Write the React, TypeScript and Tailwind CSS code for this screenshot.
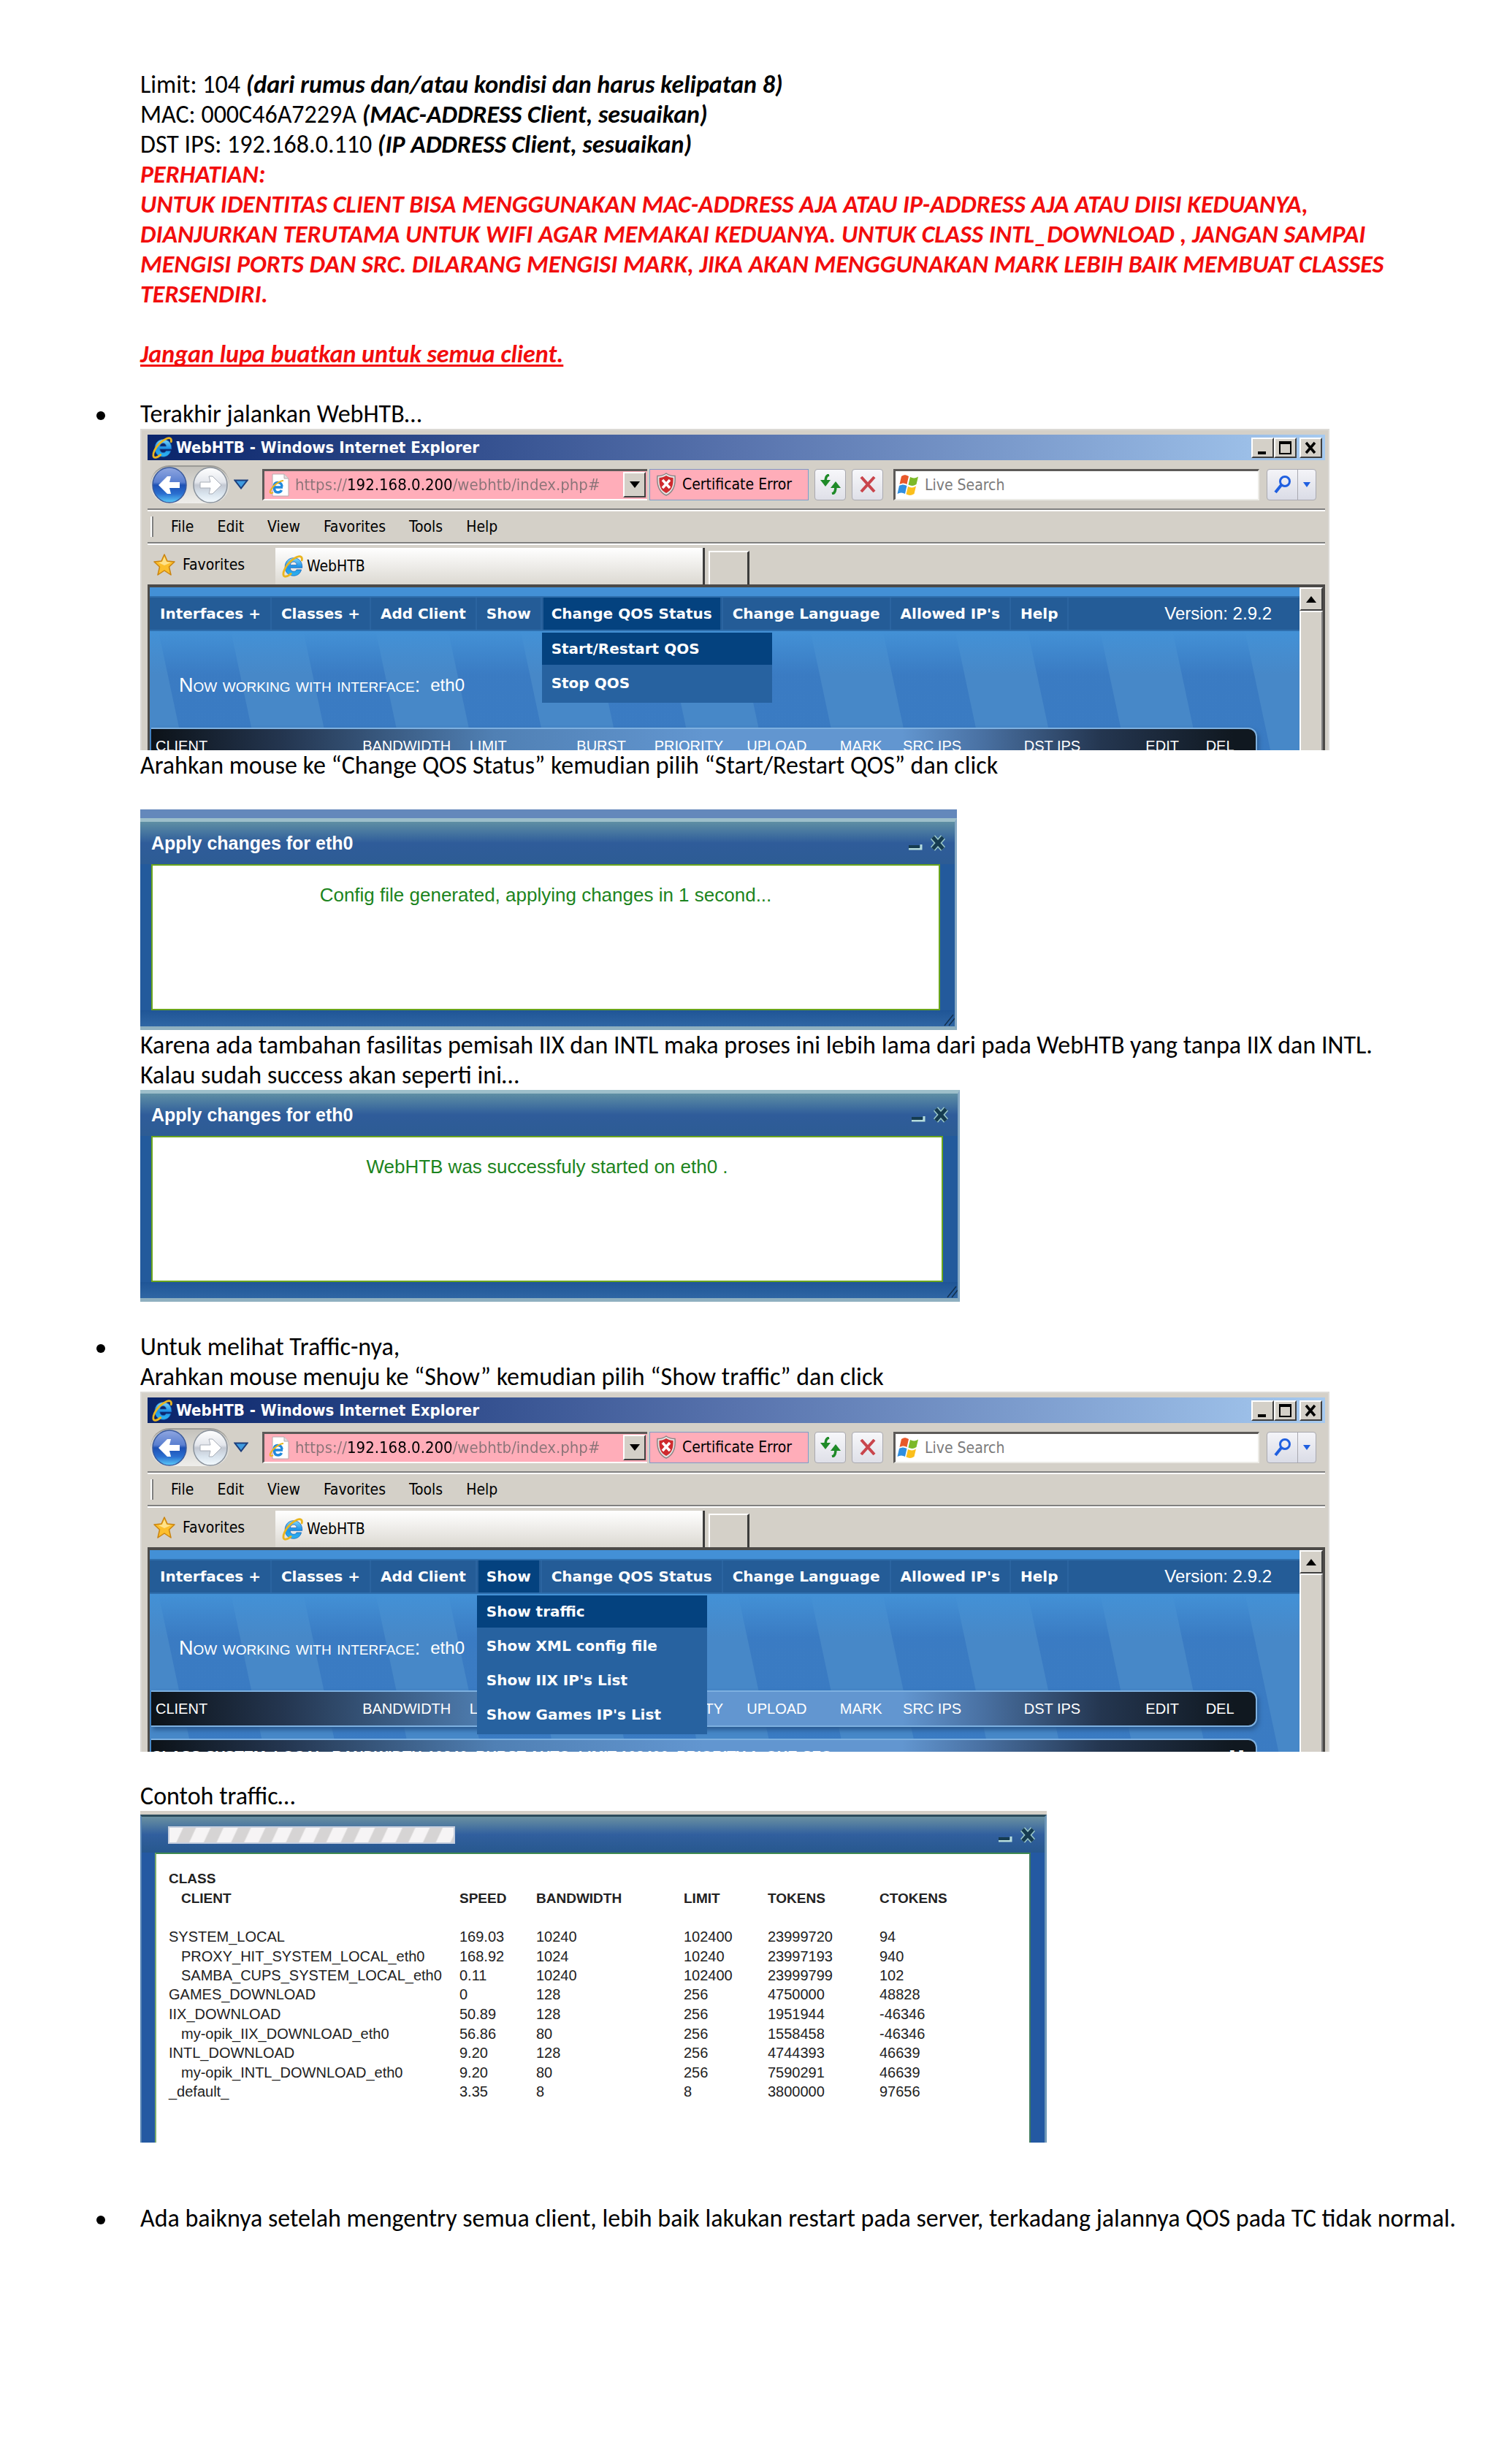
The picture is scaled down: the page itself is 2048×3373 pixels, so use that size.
import { useId, type ReactNode } from 'react';

type MenuItem = {
  label: string;
  children?: string[];
};

type Column = {
  label: string;
  width: string;
};

type TrafficRow = {
  name: string;
  nested?: boolean;
  values: string[];
};

const IE_MENU = ['File', 'Edit', 'View', 'Favorites', 'Tools', 'Help'];

const NAV_ITEMS: MenuItem[] = [
  { label: 'Interfaces +' },
  { label: 'Classes +' },
  { label: 'Add Client' },
  { label: 'Show', children: ['Show traffic', 'Show XML config file', "Show IIX IP's List", "Show Games IP's List"] },
  { label: 'Change QOS Status', children: ['Start/Restart QOS', 'Stop QOS'] },
  { label: 'Change Language' },
  { label: "Allowed IP's" },
  { label: 'Help' },
];

const CLIENT_COLUMNS: Column[] = [
  { label: 'CLIENT', width: 'w-[288px]' },
  { label: 'BANDWIDTH', width: 'w-[146px]' },
  { label: 'LIMIT', width: 'w-[146px]' },
  { label: 'BURST', width: 'w-[106px]' },
  { label: 'PRIORITY', width: 'w-[126px]' },
  { label: 'UPLOAD', width: 'w-[127px]' },
  { label: 'MARK', width: 'w-[86px]' },
  { label: 'SRC IPS', width: 'w-[165px]' },
  { label: 'DST IPS', width: 'w-[166px]' },
  { label: 'EDIT', width: 'w-[82px]' },
  { label: 'DEL', width: 'w-[68px]' },
];

const TRAFFIC_ROWS: TrafficRow[] = [
  { name: 'SYSTEM_LOCAL', values: ['169.03', '10240', '102400', '23999720', '94'] },
  { name: 'PROXY_HIT_SYSTEM_LOCAL_eth0', nested: true, values: ['168.92', '1024', '10240', '23997193', '940'] },
  { name: 'SAMBA_CUPS_SYSTEM_LOCAL_eth0', nested: true, values: ['0.11', '10240', '102400', '23999799', '102'] },
  { name: 'GAMES_DOWNLOAD', values: ['0', '128', '256', '4750000', '48828'] },
  { name: 'IIX_DOWNLOAD', values: ['50.89', '128', '256', '1951944', '-46346'] },
  { name: 'my-opik_IIX_DOWNLOAD_eth0', nested: true, values: ['56.86', '80', '256', '1558458', '-46346'] },
  { name: 'INTL_DOWNLOAD', values: ['9.20', '128', '256', '4744393', '46639'] },
  { name: 'my-opik_INTL_DOWNLOAD_eth0', nested: true, values: ['9.20', '80', '256', '7590291', '46639'] },
  { name: '_default_', values: ['3.35', '8', '8', '3800000', '97656'] },
];

function ExplorerLogo({ className }: { className: string }) {
  const id = useId();
  return (
    <svg viewBox="0 0 32 34" className={className} aria-hidden="true">
      <defs>
        <linearGradient id={id} x1="0" y1="0" x2="0" y2="1">
          <stop offset="0" stopColor="#7fd6fb" />
          <stop offset="0.5" stopColor="#1f93e6" />
          <stop offset="1" stopColor="#2fb4f0" />
        </linearGradient>
      </defs>
      <path
        d="M30 19.5H12.5c.2 3.4 2.2 5.3 5 5.3 2.2 0 3.6-.9 4.3-2.6h7c-1.3 5.4-5.7 8.8-11.4 8.8C10.1 31 5 26 5 18.3 5 10.5 10.2 5 17.4 5 25.3 5 30.5 10.5 30 19.5zM12.6 15.4h9.5c-.3-3-1.9-4.7-4.6-4.7s-4.5 1.7-4.9 4.7z"
        fill={`url(#${id})`}
        stroke="#1560b8"
        strokeWidth="0.8"
      />
      <path
        d="M29.5 8.5C30.5 4 28 1.5 23 3.5 16 6.3 8 14 4.5 21.5c-2.8 6-2.6 10.8 1.3 10.6 2.2-.1 5-1.6 7.7-4"
        fill="none"
        stroke="#e9b520"
        strokeWidth="3"
        strokeLinecap="round"
      />
    </svg>
  );
}

function NavArrow({ direction }: { direction: 'back' | 'forward' }) {
  const id = useId();
  const back = direction === 'back';
  return (
    <svg viewBox="0 0 48 50" className="block h-[50px] w-12" aria-hidden="true">
      <defs>
        <linearGradient id={id} x1="0" y1="0" x2="0" y2="1">
          <stop offset="0" stopColor={back ? '#8fa6e0' : '#ffffff'} />
          <stop offset="0.42" stopColor={back ? '#5a7fd0' : '#e3e6ec'} />
          <stop offset="0.5" stopColor={back ? '#1d50b4' : '#c3c8d2'} />
          <stop offset="0.75" stopColor={back ? '#2a6fd0' : '#d9e4ee'} />
          <stop offset="1" stopColor={back ? '#5ccbfa' : '#f4fbff'} />
        </linearGradient>
      </defs>
      <ellipse cx="24" cy="25" rx="23" ry="24" fill={`url(#${id})`} stroke={back ? '#3a5a9c' : '#8a929c'} strokeWidth="1.5" />
      <path
        d={back ? 'M9 25 21 13h5l-2 8h14v8H24l2 8h-5z' : 'M39 25 27 13h-5l2 8H10v8h14l-2 8h5z'}
        fill="#fff"
        stroke={back ? 'none' : '#a8aeb8'}
        strokeWidth="1"
        strokeLinejoin="round"
      />
    </svg>
  );
}

function CaptionButton({ label, children }: { label: string; children: ReactNode }) {
  return (
    <button
      type="button"
      aria-label={label}
      className="h-7 w-[31px] border-2 border-t-white border-l-white border-r-[#404040] border-b-[#404040] bg-[#d4d0c8]"
    >
      <svg viewBox="0 0 27 24" className="h-6 w-[27px]" fill="none" stroke="#000" aria-hidden="true">
        {children}
      </svg>
    </button>
  );
}

function TitleBar() {
  return (
    <div className="flex h-[35px] items-center bg-linear-to-r from-[#0a246a] via-[#5873ad] to-[#a6caf0] pr-1 pl-[5px]">
      <ExplorerLogo className="h-[31px] w-[30px]" />
      <h2 className="ml-1 flex-1 font-[DejaVu_Sans_Condensed,DejaVu_Sans,sans-serif] text-[22px] leading-7 font-bold text-white">
        WebHTB - Windows Internet Explorer
      </h2>
      <CaptionButton label="Minimize">
        <path d="M7 19h11" strokeWidth="4" />
      </CaptionButton>
      <CaptionButton label="Maximize">
        <path d="M5 5h17" strokeWidth="4" />
        <path d="M6 4v16h15V4" strokeWidth="2" />
      </CaptionButton>
      <div className="w-1" />
      <CaptionButton label="Close">
        <path d="m7 5 12 14M19 5 7 19" strokeWidth="3.5" />
      </CaptionButton>
    </div>
  );
}

function AddressBar() {
  const addressId = useId();
  const searchId = useId();
  return (
    <div className="flex h-[68px] items-center border-b-2 border-[#808080] pl-1">
      <div className="flex gap-2 rounded-full border-t-2 border-[#9b9a96] bg-linear-to-b from-[#c4c2bc] to-[#efeeeb] px-0.5">
        <button type="button" aria-label="Back">
          <NavArrow direction="back" />
        </button>
        <button type="button" aria-label="Forward">
          <NavArrow direction="forward" />
        </button>
      </div>
      <button type="button" aria-label="Recent pages" className="ml-1.5">
        <svg viewBox="0 0 20 14" className="h-3.5 w-5" aria-hidden="true">
          <path d="M1.5 1.5h17L10 12.5z" fill="#3f9be0" stroke="#1c3f7c" strokeWidth="2" />
        </svg>
      </button>

      <div className="ml-[19px] flex h-[43px] w-[527px] items-center border-t-3 border-l-3 border-b-2 border-t-[#5c5a58] border-l-[#5c5a58] border-b-white bg-[#ffadb9] pl-1.5">
        <svg viewBox="0 0 28 32" className="h-8 w-7 shrink-0" aria-hidden="true">
          <path d="M5 1h16l6 6v24H5z" fill="#fff" stroke="#b9a9ad" />
          <path d="M21 1v6h6" fill="#dedede" stroke="#b9a9ad" />
          <path d="M19 19H7c0-4 2-6.5 5.5-6.5S18 15 18 18M7.5 20c0 4 2 6 5 6 2.500 0 4-1 5-3" fill="none" stroke="#2088dc" strokeWidth="3.5" />
          <path d="M20 10c-5 0-15 7-18 14-1 3 1 4 4 2" fill="none" stroke="#e9b520" strokeWidth="2" />
        </svg>
        <label htmlFor={addressId} className="sr-only">
          Address
        </label>
        <input
          id={addressId}
          type="text"
          defaultValue="https://192.168.0.200/webhtb/index.php#"
          className="ml-2 min-w-0 flex-1 bg-linear-[90deg,#8a7478_71px,#000_71px,#000_216px,#8a7478_216px] bg-clip-text font-[DejaVu_Sans_Condensed,DejaVu_Sans,sans-serif] text-[22px] leading-8 text-transparent outline-none"
        />
        <button
          type="button"
          aria-label="Show address list"
          className="mr-0.5 flex h-[35px] w-[31px] items-center justify-center border-2 border-t-white border-l-white border-r-[#404040] border-b-[#404040] bg-[#d4d0c8]"
        >
          <svg viewBox="0 0 14 9" className="h-[9px] w-3.5" aria-hidden="true">
            <path d="M0 0h14L7 9z" />
          </svg>
        </button>
      </div>

      <button
        type="button"
        className="ml-[3px] flex h-[43px] w-[218px] items-center gap-2 border border-[#7b9cc8] bg-[#ffadb9] pl-2 font-[DejaVu_Sans_Condensed,DejaVu_Sans,sans-serif] text-[21px] whitespace-nowrap text-black"
      >
        <svg viewBox="0 0 28 32" className="h-8 w-7 shrink-0" aria-hidden="true">
          <path d="M14 1c4 3 8 3.500 12 3.500C27 16 25 26 14 31 3 26 1 16 2 4.500 6 4.500 10 4 14 1z" fill="#e8e4e4" stroke="#8b8585" strokeWidth="1.5" />
          <path d="M14 4c3 2 6.500 3 9.500 3C24 17 22 24 14 28 6 24 4 17 4.500 7 7.500 7 11 6 14 4z" fill="#cf2a2e" />
          <path d="m9 10 10 11M19 10 9 21" stroke="#fff" strokeWidth="3.5" />
        </svg>
        Certificate Error
      </button>

      <button type="button" aria-label="Refresh" className="ml-2 flex h-[43px] w-[43px] items-center justify-center rounded-[4px] border border-[#a9a9b0] bg-linear-to-b from-[#f7f7fa] to-[#dfe0e8]">
        <svg viewBox="0 0 30 28" className="h-7 w-[30px]" fill="none" stroke="#1f8a28" strokeWidth="3.5" aria-hidden="true">
          <path d="M13 1c-4 1-5 4-5 11" />
          <path d="M1 8h14l-7 9z" fill="#1f8a28" stroke="none" />
          <path d="M17 27c4-1 5-4 5-11" />
          <path d="M15 19h14l-7-9z" fill="#1f8a28" stroke="none" />
        </svg>
      </button>
      <button type="button" aria-label="Stop" className="ml-2 flex h-[43px] w-[43px] items-center justify-center rounded-[4px] border border-[#a9a9b0] bg-linear-to-b from-[#f7f7fa] to-[#dfe0e8]">
        <svg viewBox="0 0 22 22" className="h-[22px] w-[22px]" fill="none" stroke="#c9454c" strokeWidth="4" aria-hidden="true">
          <path d="m2 1 18 20M20 1 2 21" />
        </svg>
      </button>

      <div className="ml-[14px] flex h-[43px] flex-1 items-center border-t-3 border-l-3 border-r-2 border-b-2 border-t-[#5c5a58] border-l-[#5c5a58] border-r-[#ecebe6] border-b-[#ecebe6] bg-white pl-0.5">
        <svg viewBox="0 0 32 30" className="h-[30px] w-8 shrink-0" aria-hidden="true">
          <path d="M6 3c4-2.500 6-2 10 0l-2.500 11c-3-2-6-2-10 0z" fill="#e8582a" />
          <path d="M18 4c4 2 7 2 11-.5L26.500 14c-4 2.500-7 2.500-11 .5z" fill="#7cb928" />
          <path d="M3 16c4-2 7-2 10.500 0L11 27c-3.500-2-7-2-10.500 0z" fill="#2f8ee0" />
          <path d="M15 17c4 2 7 2 11-.5L23.500 27c-4 2.500-7 2.500-11 .5z" fill="#fbbf1c" />
        </svg>
        <label htmlFor={searchId} className="sr-only">
          Search
        </label>
        <input
          id={searchId}
          type="search"
          placeholder="Live Search"
          className="ml-1.5 min-w-0 flex-1 bg-transparent font-[DejaVu_Sans_Condensed,DejaVu_Sans,sans-serif] text-[21px] leading-8 outline-none placeholder:text-[#7a7a7a] placeholder:opacity-100"
        />
      </div>

      <div className="mr-3 ml-2.5 flex h-[43px] rounded-[4px] border border-[#a9a9b0] bg-linear-to-b from-[#f4f4f8] to-[#dadce6]">
        <button type="button" aria-label="Search" className="flex w-[42px] items-center justify-center border-r border-[#a9a9b0]">
          <svg viewBox="0 0 26 26" className="h-[26px] w-[26px]" fill="none" stroke="#1f5fe0" aria-hidden="true">
            <circle cx="16" cy="9" r="6.5" strokeWidth="3" />
            <path d="M11 14 3 24" strokeWidth="4" />
          </svg>
        </button>
        <button type="button" aria-label="Search options" className="flex w-6 items-center justify-center">
          <svg viewBox="0 0 10 7" className="h-[7px] w-2.5" aria-hidden="true">
            <path d="M0 0h10L5 7z" fill="#1f5fe0" />
          </svg>
        </button>
      </div>
    </div>
  );
}

function MenuRow() {
  return (
    <div className="flex h-[46px] items-center border-t-2 border-b-2 border-t-white border-b-[#808080] pl-1">
      <div className="h-7 w-1 border-r-2 border-l-2 border-r-[#808080] border-l-white" />
      <div className="ml-6 flex gap-8 font-[DejaVu_Sans_Condensed,DejaVu_Sans,sans-serif] text-[21px] leading-8 text-black">
        {IE_MENU.map((item) => (
          <button key={item} type="button">
            {item}
          </button>
        ))}
      </div>
    </div>
  );
}

function TabRow() {
  return (
    <div className="flex h-14 items-end border-t-2 border-white font-[DejaVu_Sans_Condensed,DejaVu_Sans,sans-serif] text-[21px] leading-8 text-black">
      <button type="button" className="flex h-[54px] w-[175px] items-center gap-2.5 pl-2">
        <svg viewBox="0 0 30 30" className="h-[30px] w-[30px]" aria-hidden="true">
          <path
            d="m15 1 4 9 10 1-7.500 7 2.500 11-9-6-9 6 2.500-11L1 11l10-1z"
            fill="#fcbf2c"
            stroke="#c98412"
            strokeWidth="1.5"
            strokeLinejoin="round"
          />
          <path d="m15 4 3 7 6 1-9 4-8-4 5-1z" fill="#ffe28a" />
        </svg>
        Favorites
      </button>
      <button
        type="button"
        className="flex h-[50px] w-[588px] items-center gap-1 border-r-3 border-[#3c3c3c] bg-linear-to-b from-white to-[#dcd9d2] pl-2"
      >
        <ExplorerLogo className="h-8 w-[31px]" />
        WebHTB
      </button>
      <button
        type="button"
        aria-label="New tab"
        className="ml-[5px] h-[46px] w-14 border-t-2 border-r-3 border-l-2 border-t-white border-r-[#3c3c3c] border-l-white"
      />
    </div>
  );
}

function MainNav({ openMenu }: { openMenu: string }) {
  return (
    <nav className="flex h-12 items-center border-y-2 border-[#2f6fae] bg-[#245c97] pl-px font-[Verdana,DejaVu_Sans,sans-serif] text-[20px] leading-[44px] font-bold text-white">
      <ul className="flex">
        {NAV_ITEMS.map((item) => {
          const open = item.label === openMenu;
          return (
            <li key={item.label} className="relative border-r-2 border-[#2b64a0] px-0.5">
              <button type="button" className={`block px-[11px] whitespace-nowrap ${open ? 'bg-[#04427f]' : ''}`} aria-expanded={open}>
                {item.label}
              </button>
              {open && (
                <ul className="absolute top-full left-0 z-10 mt-1 w-[315px] bg-[#2762a0] pb-0.5">
                  {item.children?.map((child, index) => (
                    <li key={child} className={`border-b-3 border-[#2762a0] px-[13px] ${index === 0 ? 'bg-[#04427f]' : ''}`}>
                      <a href="#">{child}</a>
                    </li>
                  ))}
                </ul>
              )}
            </li>
          );
        })}
      </ul>
      <p className="mr-[38px] ml-auto font-[Liberation_Sans,Arial,sans-serif] text-2xl font-normal">Version: 2.9.2</p>
    </nav>
  );
}

function ClientHeader() {
  return (
    <div className="mr-[58px] ml-0.5 overflow-hidden rounded-r-[12px] border-2 border-l-0 border-[#7db0e0] bg-linear-[90deg,#0c1218_0%,#243650_12%,#5080b4_31%,#6296d0_50%,#6296d0_68%,#4a72a4_75%,#243650_86%,#101820_98%] shadow-[2px_4px_6px_#2a5a90]">
      <table className="w-full table-fixed text-left text-[20px] leading-[46px] text-white">
        <thead>
          <tr>
            {CLIENT_COLUMNS.map((column, index) => (
              <th key={column.label} className={`${column.width} font-normal whitespace-nowrap ${index === 0 ? 'pl-1.5' : ''}`}>
                {column.label}
              </th>
            ))}
          </tr>
        </thead>
      </table>
    </div>
  );
}

function WebHtbPage({ openMenu }: { openMenu: string }) {
  return (
    <div className="flex border-t-4 border-l-3 border-[#4c4a48]">
      <div className="flex-1 bg-[#4788c8] font-[Liberation_Sans,Arial,sans-serif]">
        <div className="h-3 bg-[#4390d6]" />
        <MainNav openMenu={openMenu} />
        <div className="h-[230px] bg-[repeating-linear-gradient(78deg,transparent_0px,transparent_59px,#2f70be88_60px,#2f70be88_156px,transparent_157px,transparent_194px)]">
          <div className="h-[230px] bg-linear-to-b from-[#4391d6] to-transparent to-[60px]">
            <p className="flex h-[132px] items-end gap-3.5 pb-11 pl-10 leading-7 text-white">
              <span className="text-[27px] leading-7 [font-variant:small-caps]">Now working with interface:</span>
              <span className="text-2xl leading-7">eth0</span>
            </p>
            <ClientHeader />
            <div className="mt-4 mr-[58px] ml-0.5 flex justify-between rounded-tr-[12px] border-t-2 border-r-2 border-[#7db0e0] bg-linear-[90deg,#0c1218_0%,#243650_12%,#5080b4_31%,#6296d0_50%,#6296d0_68%,#4a72a4_75%,#243650_86%,#101820_98%] pt-2 pr-4 text-[20px] leading-7 font-bold text-white">
              <p className="whitespace-pre">CLASS:SYSTEM_LOCAL  BANDWIDTH:10240  BURST:AUTO  LIMIT:102400  PRIORITY:1  QUE:SFQ</p>
              <p>[-]</p>
            </div>
          </div>
        </div>
      </div>
      <div className="w-[35px] border-r-3 border-[#4c4a48] bg-[#e9e7e2]">
        <button
          type="button"
          aria-label="Scroll up"
          className="flex h-8 w-full items-center justify-center border-2 border-t-white border-l-white border-r-[#404040] border-b-[#404040] bg-[#d4d0c8]"
        >
          <svg viewBox="0 0 14 9" className="h-[9px] w-3.5" aria-hidden="true">
            <path d="M0 9h14L7 0z" />
          </svg>
        </button>
        <div className="h-full border-2 border-t-white border-l-white border-r-[#808080] border-b-0 bg-[#d4d0c8]" />
      </div>
    </div>
  );
}

function BrowserWindow({ openMenu, height }: { openMenu: string; height: string }) {
  return (
    <section className={`w-full max-w-[1628px] overflow-hidden border-2 border-b-0 border-[#dcdad6] bg-[#d4d0c8] pt-1.5 pr-1 pl-2 ${height}`}>
      <TitleBar />
      <AddressBar />
      <MenuRow />
      <TabRow />
      <WebHtbPage openMenu={openMenu} />
    </section>
  );
}

function DialogControls() {
  return (
    <div className="flex items-center gap-2.5">
      <button type="button" aria-label="Minimize window">
        <svg viewBox="0 0 20 22" className="h-[22px] w-5" aria-hidden="true">
          <path d="M1 19h17v-6" fill="none" stroke="#b6dcdc" strokeWidth="3" />
          <path d="M1 16h15" stroke="#163c50" strokeWidth="4" />
        </svg>
      </button>
      <button type="button" aria-label="Close window">
        <svg viewBox="0 0 22 22" className="h-[22px] w-[22px]" fill="none" aria-hidden="true">
          <path d="m4 3 14 16M18 3 4 19" stroke="#9ccaca" strokeWidth="8" />
          <path d="m4 3 14 16M18 3 4 19" stroke="#163c50" strokeWidth="5" />
        </svg>
      </button>
    </div>
  );
}

function ApplyDialog({ message, width }: { message: string; width: string }) {
  return (
    <section className={`relative w-full border-t-5 border-r-3 border-b-5 border-t-[#9dbfca] border-r-[#86a9c4] border-b-[#8fb0c0] bg-[#235a9c] font-[Liberation_Sans,Arial,sans-serif] ${width}`}>
      <div className="flex h-[58px] items-center justify-between bg-linear-to-b from-[#5f8fa4] via-[#2f5c9a] via-50% to-[#2d5c94] pr-3 pl-[15px]">
        <h3 className="text-[25px] leading-8 font-bold text-white">Apply changes for eth0</h3>
        <DialogControls />
      </div>
      <div className="mr-[20px] ml-[15px] h-[200px] border-2 border-[#6ba51c] bg-white pt-6">
        <p className="text-center text-[26px] leading-8 text-[#1c8420]">{message}</p>
      </div>
      <div className="h-[22px] bg-linear-to-b from-[#1f5596] to-[#2f66a4]" />
      <svg viewBox="0 0 16 18" className="absolute right-0 bottom-0 h-[18px] w-4" stroke="#12304f" strokeWidth="1.5" aria-hidden="true">
        <path d="M2 17 14 2M8 17l8-10" />
      </svg>
    </section>
  );
}

function TrafficWindow() {
  return (
    <section className="w-full max-w-[1241px] border-t-5 border-[#d5d0c8] font-[Liberation_Sans,Arial,sans-serif]">
      <div className="border-t-3 border-r-3 border-l-2 border-t-[#2c4c5c] border-r-[#6f98b8] border-l-[#5a86b4] bg-[#2459a2]">
        <div className="flex h-[49px] items-center justify-between bg-linear-to-b from-[#6a90a0] via-[#315f9e] via-50% to-[#27588e] pr-3 pl-9">
          <div className="h-6 w-[393px] border-2 border-[#c5cede] bg-[repeating-linear-gradient(115deg,#f6f4f5_0px,#f6f4f5_16px,#d6d4d4_18px,#d6d4d4_32px,#f6f4f5_34px)]" />
          <DialogControls />
        </div>
        <div className="mr-[19px] ml-[18px] h-[397px] border-2 border-b-0 border-t-[#3f8a50] border-r-[#3f7a60] border-l-[#7cab6c] bg-white pt-5 pl-[17px]">
          <table className="w-[1110px] max-w-full table-fixed text-left text-[20px] text-[#222]">
            <thead className="align-bottom text-[19px] leading-[27px]">
              <tr>
                <th className="w-[398px] pb-[26px]">
                  CLASS
                  <span className="block pl-[17px]">CLIENT</span>
                </th>
                <th className="w-[105px] pb-[26px]">SPEED</th>
                <th className="w-[202px] pb-[26px]">BANDWIDTH</th>
                <th className="w-[115px] pb-[26px]">LIMIT</th>
                <th className="w-[153px] pb-[26px]">TOKENS</th>
                <th className="pb-[26px]">CTOKENS</th>
              </tr>
            </thead>
            <tbody>
              {TRAFFIC_ROWS.map((row) => (
                <tr key={row.name} className={row.nested ? 'leading-[26px]' : 'leading-[27px]'}>
                  <td className={`whitespace-nowrap ${row.nested ? 'pl-[17px]' : ''}`}>{row.name}</td>
                  {row.values.map((value, index) => (
                    <td key={index}>{value}</td>
                  ))}
                </tr>
              ))}
            </tbody>
          </table>
        </div>
      </div>
    </section>
  );
}

function Step({ children }: { children: ReactNode }) {
  return (
    <li className="flex">
      <span className="flex h-[41px] w-[60px] shrink-0 items-center" aria-hidden="true">
        <span className="mt-1 h-3 w-3 rounded-full bg-black" />
      </span>
      <div className="min-w-0 flex-1">{children}</div>
    </li>
  );
}

export default function App() {
  return (
    <main className="min-h-screen bg-white pt-[95px] pb-16 pl-[132px] font-[Carlito,Lato,sans-serif] text-[34px] leading-[41px] text-black">
      <div className="max-w-[1800px] pl-[60px]">
        <p>
          Limit: 104 <b className="italic">(dari rumus dan/atau kondisi dan harus kelipatan 8)</b>
        </p>
        <p>
          MAC: 000C46A7229A <b className="italic">(MAC-ADDRESS Client, sesuaikan)</b>
        </p>
        <p>
          DST IPS: 192.168.0.110 <b className="italic">(IP ADDRESS Client, sesuaikan)</b>
        </p>
        <div className="font-bold text-[#f20d0d] italic">
          <p>PERHATIAN:</p>
          <p>
            UNTUK IDENTITAS CLIENT BISA MENGGUNAKAN MAC-ADDRESS AJA ATAU IP-ADDRESS AJA ATAU DIISI KEDUANYA,
            <br />
            DIANJURKAN TERUTAMA UNTUK WIFI AGAR MEMAKAI KEDUANYA. UNTUK CLASS INTL_DOWNLOAD , JANGAN SAMPAI
            <br />
            MENGISI PORTS DAN SRC. DILARANG MENGISI MARK, JIKA AKAN MENGGUNAKAN MARK LEBIH BAIK MEMBUAT CLASSES
            <br />
            TERSENDIRI.
          </p>
          <p className="mt-[41px] underline decoration-3 underline-offset-3 [text-decoration-skip-ink:none]">
            Jangan lupa buatkan untuk semua client.
          </p>
        </div>
      </div>

      <ul className="mt-[41px]">
        <Step>
          <p>Terakhir jalankan WebHTB…</p>
          <BrowserWindow openMenu="Change QOS Status" height="h-[440px]" />
          <p>Arahkan mouse ke “Change QOS Status” kemudian pilih “Start/Restart QOS” dan click</p>
          <div className="mt-10 w-full max-w-[1118px] border-t-12 border-[#6488bb]">
            <ApplyDialog message="Config file generated, applying changes in 1 second..." width="max-w-[1118px]" />
          </div>
          <p>Karena ada tambahan fasilitas pemisah IIX dan INTL maka proses ini lebih lama dari pada WebHTB yang tanpa IIX dan INTL.</p>
          <p>Kalau sudah success akan seperti ini…</p>
          <ApplyDialog message="WebHTB was successfuly started on eth0 ." width="max-w-[1122px]" />
        </Step>
        <li className="h-[41px]" aria-hidden="true" />
        <Step>
          <p>Untuk melihat Traffic-nya,</p>
          <p>Arahkan mouse menuju ke “Show” kemudian pilih “Show traffic” dan click</p>
          <BrowserWindow openMenu="Show" height="h-[493px]" />
          <p className="mt-10">Contoh traffic…</p>
          <TrafficWindow />
        </Step>
        <li className="h-[83px]" aria-hidden="true" />
        <Step>
          <p>Ada baiknya setelah mengentry semua client, lebih baik lakukan restart pada server, terkadang jalannya QOS pada TC tidak normal.</p>
        </Step>
      </ul>
    </main>
  );
}
